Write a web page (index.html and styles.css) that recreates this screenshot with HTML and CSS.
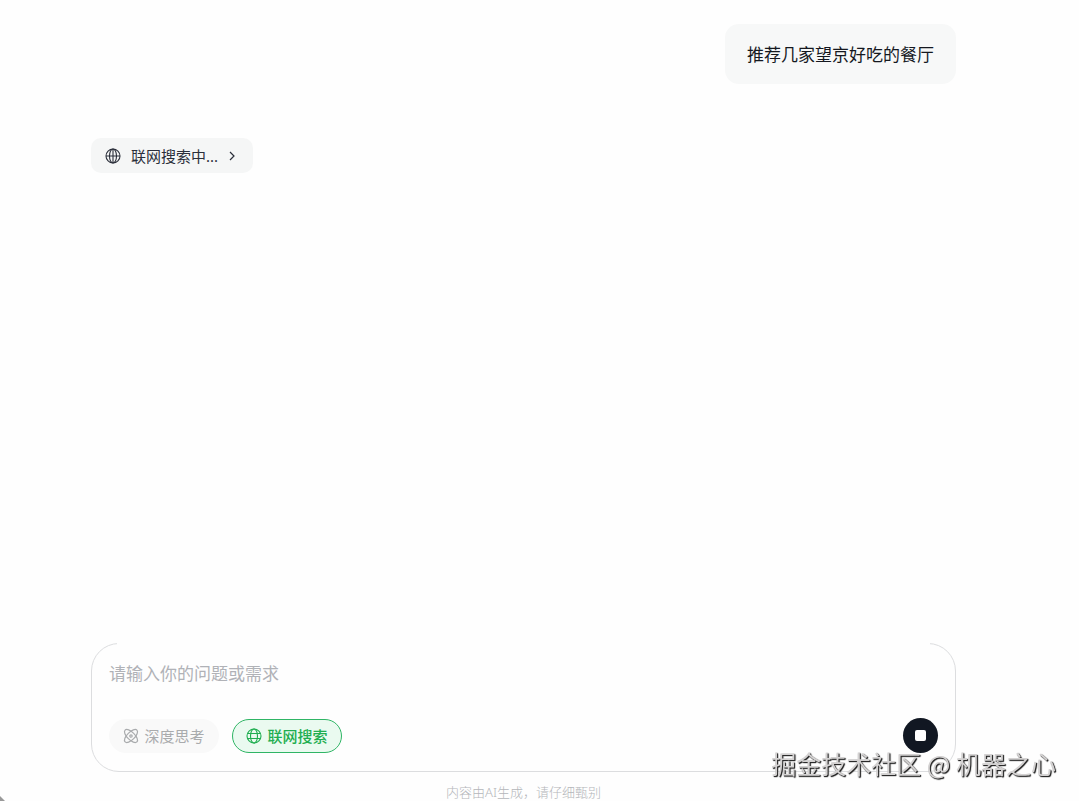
FILE: index.html
```html
<!DOCTYPE html>
<html lang="zh-CN">
<head>
    <meta charset="utf-8">
    <title>联网搜索</title>
    <link rel="stylesheet" href="styles.css">
</head>
<body>
<main class="chat">
    <div class="messages">
        <p class="bubble">推荐几家望京好吃的餐厅</p>

        <button type="button" class="searching">
            <svg class="globe" viewBox="0 0 16 16">
                <circle cx="8" cy="8" r="7"/>
                <ellipse cx="8" cy="8" rx="3.5" ry="7"/>
                <path d="M1 8h14M8 1v14"/>
            </svg>
            <span>联网搜索中...</span>
            <svg class="arrow" viewBox="0 0 8 10">
                <path d="M2 1l4 4-4 4"/>
            </svg>
        </button>
    </div>

    <form class="composer">
        <textarea class="question" rows="1" aria-label="请输入你的问题或需求" placeholder="请输入你的问题或需求"></textarea>
        <div class="tools">
            <button type="button" class="pill">
                <svg class="atom" viewBox="0 0 16 16">
                    <ellipse cx="8" cy="8" rx="8.4" ry="3.8" transform="rotate(45 8 8)"/>
                    <ellipse cx="8" cy="8" rx="8.4" ry="3.8" transform="rotate(-45 8 8)"/>
                    <circle cx="8" cy="8" r="1.2"/>
                </svg>
                深度思考
            </button>
            <button type="button" class="pill pill-on">
                <svg class="globe" viewBox="0 0 16 16">
                    <circle cx="8" cy="8" r="7"/>
                    <ellipse cx="8" cy="8" rx="3.5" ry="7"/>
                    <path d="M1.5 5.5h13M1.5 10.5h13"/>
                </svg>
                联网搜索
            </button>
            <button type="button" class="stop" aria-label="停止"><span class="square"></span></button>
        </div>
    </form>
    <p class="notice">内容由AI生成，请仔细甄别</p>
</main>

<div class="watermark">掘金技术社区 @ 机器之心</div>
<div class="corner"></div>
</body>
</html>
```

FILE: styles.css
```css
* {
    box-sizing: border-box;
}

body {
    margin: 0;
    padding: 0 32px 0 0;
    background-color: #fefefe;
    color: #15181f;
    font-family: "Noto Sans", "Noto Sans CJK SC", sans-serif;
}

button, textarea {
    font-family: inherit;
}

p {
    margin: 0;
}

svg {
    fill: none;
    stroke: currentColor;
    flex: none;
}

.chat {
    display: flex;
    flex-direction: column;
    max-width: 865px;
    min-height: 100vh;
    margin: 0 auto;
}

.messages {
    display: flex;
    flex-direction: column;
    flex: 1;
    padding-top: 24px;
}

.bubble {
    align-self: flex-end;
    padding: 19px 22px 17px;
    border-radius: 14px;
    background-color: #f7f8f8;
    font-size: 17px;
    line-height: 24px;
}

.searching {
    display: flex;
    align-items: center;
    align-self: flex-start;
    gap: 10px;
    height: 35px;
    margin-top: 54px;
    padding: 0 17px 0 14px;
    border: none;
    border-radius: 10px;
    background-color: #f5f6f6;
    color: #2b2f3a;
    font-size: 15px;
}

.globe {
    width: 16px;
    height: 16px;
    stroke-width: 1.1;
}

.arrow {
    width: 8px;
    height: 10px;
    stroke-width: 1.2;
}

.composer {
    position: relative;
    padding: 16px 17px 18px;
    border: 1px solid #dcdddf;
    border-radius: 28px;
}

/* the outline stays open between the two top corners */
.composer::before {
    content: "";
    position: absolute;
    top: -1px;
    left: 25px;
    right: 25px;
    height: 2px;
    background-color: #fefefe;
}

.question {
    display: block;
    width: 100%;
    height: 28px;
    padding: 0;
    border: none;
    outline: none;
    resize: none;
    background: none;
    font-size: 17px;
    line-height: 28px;
}

.question::placeholder {
    color: #b0b2b7;
}

.tools {
    display: flex;
    align-items: center;
    gap: 13px;
    margin-top: 30px;
}

.pill {
    display: flex;
    align-items: center;
    justify-content: center;
    gap: 5px;
    width: 110px;
    height: 34px;
    padding: 0;
    border: 1px solid transparent;
    border-radius: 17px;
    background-color: #f9f9f9;
    color: #a9abad;
    font-size: 15px;
}

.pill-on {
    border-color: #2fb565;
    background-color: #eafaf0;
    color: #1fae50;
    font-weight: 500;
}

.atom {
    width: 16px;
    height: 16px;
    stroke-width: 1.2;
}

.stop {
    display: flex;
    align-items: center;
    justify-content: center;
    width: 35px;
    height: 35px;
    margin-left: auto;
    padding: 0;
    border: none;
    border-radius: 50%;
    background-color: #111722;
}

.square {
    width: 11px;
    height: 11px;
    border-radius: 2px;
    background-color: #fff;
}

.notice {
    padding-top: 12px;
    color: #b4b6ba;
    font-size: 13px;
    font-weight: 300;
    line-height: 17px;
    text-align: center;
}

.watermark {
    position: fixed;
    right: 23px;
    bottom: 20px;
    color: #d4d2d2;
    font-family: "Noto Sans CJK SC", sans-serif;
    font-size: 25px;
    line-height: 36px;
    text-shadow: 1px 1px 1px #222, 1px 1px 1px #555;
}

.corner {
    position: fixed;
    left: 0;
    bottom: 0;
    border-top: 5px solid transparent;
    border-left: 5px solid #999;
}
```
